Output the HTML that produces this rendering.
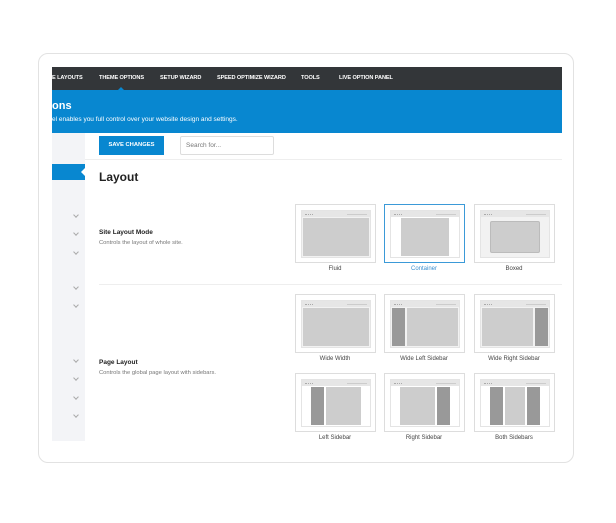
<!DOCTYPE html><html><head><style>
body{margin:0;width:616px;height:523px;background:#fff;font-family:"Liberation Sans",sans-serif;position:relative;overflow:hidden}
.a{position:absolute}
.card{left:38px;top:53px;width:534px;height:408px;border:1px solid #e2e2e2;border-radius:10px}
.nav{left:52px;top:67px;width:510px;height:23px;background:#333639}
.nav span{position:absolute;top:8px;color:#fff;font-size:5.6px;font-weight:bold;letter-spacing:-.1px;white-space:nowrap}
.blue{left:52px;top:90px;width:510px;height:43px;background:#0887d0;color:#fff}
.side{left:52px;top:133px;width:33px;height:308px;background:#f3f4f7}
.chev{position:absolute;left:22px;width:3px;height:3px;border-right:1px solid #aaa;border-bottom:1px solid #aaa;transform:rotate(45deg)}
.t{position:absolute;width:79px;height:57px;border:1px solid #ddd;background:#fff}
.t.sel{border-color:#3b9ad8}
.f{position:absolute;left:5px;top:5px;width:68px;height:46px;background:#f2f2f2;border:1px solid #e4e4e4}
.h{position:absolute;left:0;top:0;right:0;height:6px;background:#e6e6e6}
.h:before{content:"";position:absolute;left:3px;top:2.5px;width:8px;height:1px;border-top:1px dotted #aaa}
.h:after{content:"";position:absolute;right:3px;top:2.5px;width:20px;height:1px;background:#ccc}
.c{position:absolute;top:7px;bottom:1px;background:#cdcdcd}
.d{position:absolute;top:7px;bottom:1px;background:#999}
.w{background:#fff}
.lbl{position:absolute;font-size:6px;color:#444;text-align:center;width:90px}
</style></head><body>
<div class="a card"></div>
<div class="a nav">
<span style="left:0">E LAYOUTS</span><span style="left:47px">THEME OPTIONS</span><span style="left:108px">SETUP WIZARD</span><span style="left:165px">SPEED OPTIMIZE WIZARD</span><span style="left:249px">TOOLS</span><span style="left:287px">LIVE OPTION PANEL</span>
</div>
<div class="a" style="left:117px;top:87px;width:0;height:0;border-left:4px solid transparent;border-right:4px solid transparent;border-bottom:4px solid #0887d0"></div>
<div class="a blue"><div class="a" style="left:0;top:10px;font-size:11px;font-weight:bold">ons</div><div class="a" style="left:0;top:26px;font-size:6.5px">el enables you full control over your website design and settings.</div></div>
<div class="a side">
<div class="chev" style="top:80px"></div><div class="chev" style="top:98px"></div><div class="chev" style="top:117px"></div><div class="chev" style="top:152px"></div><div class="chev" style="top:170px"></div><div class="chev" style="top:225px"></div><div class="chev" style="top:243px"></div><div class="chev" style="top:262px"></div><div class="chev" style="top:280px"></div>
</div>
<div class="a" style="left:52px;top:164px;width:33px;height:16px;background:#0887d0"></div>
<div class="a" style="left:81px;top:168px;width:0;height:0;border-top:4px solid transparent;border-bottom:4px solid transparent;border-right:4px solid #fff"></div>
<div class="a" style="left:99px;top:136px;width:65px;height:19px;background:#0887d0;color:#fff;font-size:5.8px;font-weight:bold;text-align:center;line-height:19px">SAVE CHANGES</div>
<div class="a" style="left:180px;top:136px;border:1px solid #ddd;border-radius:2px;font-size:6.5px;color:#777;line-height:17px;padding-left:5px;box-sizing:border-box;width:94px;height:19px">Search for...</div>
<div class="a" style="left:85px;top:159px;width:477px;height:1px;background:#eee"></div>
<div class="a" style="left:99px;top:170px;font-size:12px;font-weight:bold;color:#222">Layout</div>
<div class="a" style="left:99px;top:229px;font-size:6.5px;font-weight:bold;color:#222">Site Layout Mode</div>
<div class="a" style="left:99px;top:240px;font-size:5.8px;color:#777">Controls the layout of whole site.</div>
<div class="a" style="left:99px;top:359px;font-size:6.5px;font-weight:bold;color:#222">Page Layout</div>
<div class="a" style="left:99px;top:370px;font-size:5.8px;color:#777">Controls the global page layout with sidebars.</div>
<div class="a" style="left:99px;top:284px;width:463px;height:1px;background:#eee"></div>

<div class="t" style="left:295px;top:204px"><div class="f"><div class="h"></div><div class="c" style="left:1px;right:1px"></div></div></div>
<div class="t sel" style="left:384px;top:204px"><div class="f w"><div class="h"></div><div class="c" style="left:10px;right:10px"></div></div></div>
<div class="t" style="left:474px;top:204px"><div class="f"><div class="h"></div><div class="c" style="left:9px;right:9px;top:10px;bottom:4px;border:1px solid #bbb;border-radius:2px"></div></div></div>
<div class="lbl" style="left:290px;top:266px">Fluid</div><div class="lbl" style="left:379px;top:266px;color:#3b8fd0">Container</div><div class="lbl" style="left:469px;top:266px">Boxed</div>

<div class="t" style="left:295px;top:294px"><div class="f"><div class="h"></div><div class="c" style="left:1px;right:1px"></div></div></div>
<div class="t" style="left:384px;top:294px"><div class="f"><div class="h"></div><div class="d" style="left:1px;width:13px"></div><div class="c" style="left:16px;right:1px"></div></div></div>
<div class="t" style="left:474px;top:294px"><div class="f"><div class="h"></div><div class="c" style="left:1px;right:16px"></div><div class="d" style="right:1px;width:13px"></div></div></div>
<div class="lbl" style="left:290px;top:356px">Wide Width</div><div class="lbl" style="left:379px;top:356px">Wide Left Sidebar</div><div class="lbl" style="left:469px;top:356px">Wide Right Sidebar</div>

<div class="t" style="left:295px;top:373px"><div class="f w"><div class="h"></div><div class="d" style="left:9px;width:13px"></div><div class="c" style="left:24px;right:9px"></div></div></div>
<div class="t" style="left:384px;top:373px"><div class="f w"><div class="h"></div><div class="c" style="left:9px;right:24px"></div><div class="d" style="right:9px;width:13px"></div></div></div>
<div class="t" style="left:474px;top:373px"><div class="f w"><div class="h"></div><div class="d" style="left:9px;width:13px"></div><div class="c" style="left:24px;right:24px"></div><div class="d" style="right:9px;width:13px"></div></div></div>
<div class="lbl" style="left:290px;top:435px">Left Sidebar</div><div class="lbl" style="left:379px;top:435px">Right Sidebar</div><div class="lbl" style="left:469px;top:435px">Both Sidebars</div>
</body></html>
